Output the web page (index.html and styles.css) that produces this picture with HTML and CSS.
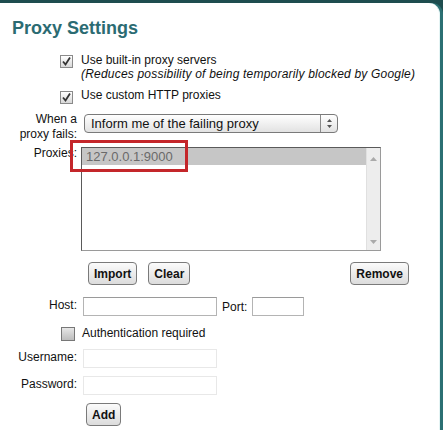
FILE: index.html
```html
<!DOCTYPE html>
<html lang="en">
    <head>
        <meta charset="UTF-8" />
        <title>Proxy Settings</title>
        <link rel="stylesheet" href="styles.css">
    </head>
    <body>
        <div class="panel">
            <h1 class="title">Proxy Settings</h1>

            <div class="check-row first">
                <span class="box checked">
                    <svg width="11" height="11" viewBox="0 0 11 11"><path d="M2 5.5 L4.5 8.5 L9 1.5" fill="none" stroke="#333" stroke-width="1.8"/></svg>
                </span>
                <div class="check-text">
                    Use built-in proxy servers<br>
                    <i>(Reduces possibility of being temporarily blocked by Google)</i>
                </div>
            </div>

            <div class="check-row second">
                <span class="box checked">
                    <svg width="11" height="11" viewBox="0 0 11 11"><path d="M2 5.5 L4.5 8.5 L9 1.5" fill="none" stroke="#333" stroke-width="1.8"/></svg>
                </span>
                <div class="check-text">Use custom HTTP proxies</div>
            </div>

            <div class="row fail-row">
                <div class="label two-line">When a<br>proxy fails:</div>
                <div class="select">
                    <span class="select-text">Inform me of the failing proxy</span>
                    <span class="stepper">
                        <svg width="7" height="11" viewBox="0 0 7 11"><path d="M3.5 1 L6 4 L1 4 Z M1 7 L6 7 L3.5 10 Z" fill="#555"/></svg>
                    </span>
                </div>
            </div>

            <div class="row proxies-row">
                <div class="label">Proxies:</div>
                <div class="listbox">
                    <div class="list-items">
                        <div class="list-item selected">127.0.0.1:9000</div>
                    </div>
                    <div class="scrollbar">
                        <svg width="9" height="6" viewBox="0 0 9 6"><path d="M4.5 1 L8 5 L1 5 Z" fill="#aaa"/></svg>
                        <svg width="9" height="6" viewBox="0 0 9 6"><path d="M1 1 L8 1 L4.5 5 Z" fill="#aaa"/></svg>
                    </div>
                </div>
                <div class="highlight"></div>
            </div>

            <div class="button-row">
                <button class="btn">Import</button>
                <button class="btn clear-btn">Clear</button>
                <button class="btn remove-btn">Remove</button>
            </div>

            <div class="row host-row">
                <div class="label">Host:</div>
                <input class="field host-field" type="text">
                <span class="port-label">Port:</span>
                <input class="field port-field" type="text">
            </div>

            <div class="check-row auth-row">
                <span class="box unchecked"></span>
                <div class="check-text">Authentication required</div>
            </div>

            <div class="row user-row">
                <div class="label">Username:</div>
                <input class="field disabled" type="text">
            </div>

            <div class="row pass-row">
                <div class="label">Password:</div>
                <input class="field disabled" type="password">
            </div>

            <div class="add-row">
                <button class="btn">Add</button>
            </div>
        </div>
    </body>
</html>
```

FILE: styles.css
```css
body {
    margin: 0;
    padding: 3px 3px 0 0;
    background: #1e4d4f;
    font-family: 'Liberation Sans', Arial, sans-serif;
    font-size: 12px;
    color: #111;
    height: 427px;
    overflow: hidden;
}

.panel {
    position: relative;
    height: 100%;
    background: #fff;
    border-top-right-radius: 11px;
    border-right: 1px solid #e4f4f4;
    box-shadow: 3px 0 0 #2b7073;
}

.title {
    margin: 0;
    padding: 14px 0 0 12px;
    font-size: 18px;
    line-height: 22px;
    font-weight: bold;
    color: #2b6b72;
}

.check-row {
    display: flex;
    align-items: flex-start;
    padding-left: 60px;
    line-height: 14px;
}

.check-row.first {
    margin-top: 14px;
}

.check-row.second {
    margin-top: 7px;
}

.box {
    flex: none;
    width: 13px;
    height: 13px;
    box-sizing: border-box;
    border: 1px solid #8a8a8a;
    background: linear-gradient(#ffffff, #d8d8d8);
    margin-top: 2px;
    margin-right: 8px;
    display: flex;
    align-items: center;
    justify-content: center;
}

.second .box {
    margin-top: 3px;
}

.box.unchecked {
    width: 14px;
    height: 14px;
    background: linear-gradient(#e6e6e6, #bdbdbd);
    border-color: #777;
    margin-top: 1px;
}

.check-text i {
    font-style: italic;
    letter-spacing: 0.2px;
}

.row {
    display: flex;
    align-items: flex-start;
}

.label {
    flex: none;
    width: 77px;
    text-align: right;
    line-height: 15px;
}

.fail-row {
    margin-top: 8px;
}

.select {
    display: flex;
    align-items: stretch;
    width: 254px;
    height: 19px;
    box-sizing: border-box;
    margin: 2px 0 0 7px;
    border: 1px solid #7a7a7a;
    border-radius: 4px;
    background: linear-gradient(#ffffff, #e2e2e2);
    font-size: 13px;
}

.select-text {
    flex: 1;
    padding-left: 6px;
    line-height: 17px;
}

.stepper {
    width: 16px;
    border-left: 1px solid #8a8a8a;
    display: flex;
    align-items: center;
    justify-content: center;
}

.proxies-row {
    position: relative;
    margin-top: 3px;
}

.proxies-row .label {
    margin-top: 1px;
}

.listbox {
    display: flex;
    width: 300px;
    height: 104px;
    box-sizing: border-box;
    margin: 2px 0 0 4px;
    border: 1px solid #5a5a5a;
    border-right-color: #9a9a9a;
    border-bottom-color: #9a9a9a;
    background: #fff;
}

.list-items {
    flex: 1;
}

.list-item {
    height: 17px;
    line-height: 17px;
    padding-left: 4px;
    font-size: 13px;
    color: #6a6a6a;
}

.list-item.selected {
    background: #c6c6c6;
}

.scrollbar {
    width: 13px;
    background: #ededed;
    border-left: 1px solid #e0e0e0;
    display: flex;
    flex-direction: column;
    justify-content: space-between;
    align-items: center;
    padding: 8px 0 5px;
}

.highlight {
    position: absolute;
    left: 70px;
    top: -5px;
    width: 112px;
    height: 26px;
    border: 3px solid #c4262a;
}

.button-row {
    display: flex;
    margin-top: 11px;
    padding-left: 88px;
    width: 321px;
}

.btn {
    height: 23px;
    padding: 0 5px;
    border: 1px solid #7a7a7a;
    border-radius: 4px;
    background: linear-gradient(#fbfbfb, #dcdcdc);
    font-family: 'Liberation Sans', Arial, sans-serif;
    font-size: 12px;
    font-weight: bold;
    color: #111;
}

.clear-btn {
    margin-left: 11px;
}

.remove-btn {
    margin-left: auto;
}

.field {
    height: 19px;
    box-sizing: border-box;
    border: 1px solid #b4b4b4;
    border-top-color: #9a9a9a;
    margin: 0;
    padding: 0 3px;
    font-family: 'Liberation Sans', Arial, sans-serif;
    font-size: 12px;
}

.host-row {
    margin-top: 12px;
}

.host-row .label {
    margin-top: 1px;
}

.host-field {
    width: 134px;
    margin-left: 6px;
}

.port-label {
    margin: 3px 0 0 5px;
    line-height: 14px;
}

.port-field {
    width: 52px;
    margin-left: 5px;
}

.auth-row {
    margin-top: 10px;
    padding-left: 61px;
}

.auth-row .box {
    margin-right: 7px;
}

.user-row {
    margin-top: 8px;
}

.pass-row {
    margin-top: 8px;
}

.user-row .label,
.pass-row .label {
    margin-top: 1px;
}

.field.disabled {
    width: 134px;
    margin-left: 6px;
    border-color: #e8e8e8;
    background: #fff;
}

.add-row {
    margin-top: 8px;
    padding-left: 86px;
}
```
